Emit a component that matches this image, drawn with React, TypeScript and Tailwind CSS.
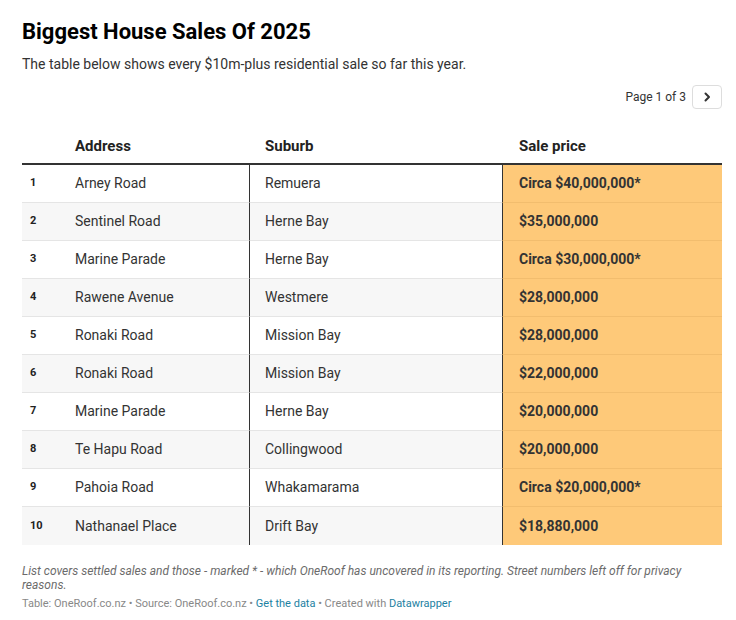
import React from "react";

const rows = [
  ["Arney Road", "Remuera", "Circa $40,000,000*"],
  ["Sentinel Road", "Herne Bay", "$35,000,000"],
  ["Marine Parade", "Herne Bay", "Circa $30,000,000*"],
  ["Rawene Avenue", "Westmere", "$28,000,000"],
  ["Ronaki Road", "Mission Bay", "$28,000,000"],
  ["Ronaki Road", "Mission Bay", "$22,000,000"],
  ["Marine Parade", "Herne Bay", "$20,000,000"],
  ["Te Hapu Road", "Collingwood", "$20,000,000"],
  ["Pahoia Road", "Whakamarama", "Circa $20,000,000*"],
  ["Nathanael Place", "Drift Bay", "$18,880,000"],
];

export default function App() {
  return (
    <div className="w-[736px] h-[620px] bg-white pl-[22px] pr-[14px] pt-[18px] text-[#333]" style={{ fontFamily: "Roboto, 'Liberation Sans', sans-serif" }}>
      <h1 className="text-[22px] leading-[28px] font-bold text-[#000]">Biggest House Sales Of 2025</h1>
      <p className="mt-[8px] text-[14px] leading-[20px] text-[#333]">The table below shows every $10m-plus residential sale so far this year.</p>
      <div className="mt-[11px] flex items-center justify-end gap-[6px]">
        <span className="text-[12px] text-[#333]">Page 1 of 3</span>
        <div className="w-[30px] h-[24px] border border-[#ddd] rounded-[4px] flex items-center justify-center">
          <svg width="12" height="12" viewBox="0 0 12 12" fill="none" stroke="#333" strokeWidth="2" strokeLinecap="round" strokeLinejoin="round"><path d="M4.5 2.5 L8 6 L4.5 9.5" /></svg>
        </div>
      </div>
      <div className="mt-[20px]">
        <div className="flex h-[36px] items-center border-b-2 border-[#333] text-[15px] font-bold text-[#222]">
          <div className="w-[40px]" />
          <div className="w-[188px] pl-[13px]">Address</div>
          <div className="w-[253px] pl-[15px]">Suburb</div>
          <div className="flex-1 pl-[16px]">Sale price</div>
        </div>
        {rows.map((r, i) => (
          <div key={i} className={`flex h-[38px] text-[14px] ${i % 2 === 1 ? "bg-[#f7f7f7]" : "bg-white"}`}>
            <div className={`w-[40px] pl-[8px] flex items-center text-[11px] font-bold text-[#222] ${i < 9 ? "border-b border-[#e5e5e5]" : ""}`}>{i + 1}</div>
            <div className={`w-[187px] pl-[13px] flex items-center ${i < 9 ? "border-b border-[#e5e5e5]" : ""}`}>{r[0]}</div>
            <div className={`w-[253px] pl-[15px] flex items-center border-l border-[#333] ${i < 9 ? "border-b border-b-[#e5e5e5]" : ""}`}>{r[1]}</div>
            <div className={`flex-1 pl-[16px] flex items-center font-bold bg-[#fec979] border-l border-[#333] ${i < 9 ? "border-b border-b-[#f2bd6e]" : ""}`}>{r[2]}</div>
          </div>
        ))}
      </div>
      <p className="mt-[19px] text-[12px] leading-[14px] italic text-[#6b6b6b]">List covers settled sales and those - marked * - which OneRoof has uncovered in its reporting. Street numbers left off for privacy reasons.</p>
      <p className="mt-[5px] text-[11px] leading-[14px] text-[#888]">
        Table: OneRoof.co.nz • Source: OneRoof.co.nz • <span className="text-[#1d81a2]">Get the data</span> • Created with <span className="text-[#1d81a2]">Datawrapper</span>
      </p>
    </div>
  );
}
